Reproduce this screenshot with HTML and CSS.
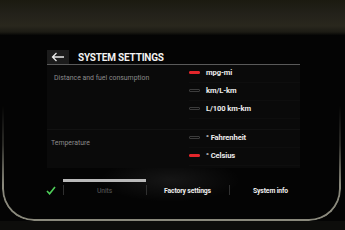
FILE: index.html
```html
<!DOCTYPE html>
<html>
<head>
<meta charset="utf-8">
<link rel="stylesheet" href="styles.css">
</head>
<body>
<div class="dash"></div>
<div class="screen">
  <div class="ui">
    <header class="head">
      <div class="back">
        <svg width="22" height="14" viewBox="0 0 22 14"><path d="M17 7H5.5M9.5 3L5.5 7l4 4" fill="none" stroke="#e8e8e8" stroke-width="1.3"/></svg>
      </div>
      <h1 class="title">SYSTEM SETTINGS</h1>
    </header>
    <div class="panel">
      <section class="group g1">
        <div class="label">Distance and fuel consumption</div>
        <ul class="opts">
          <li class="opt on"><span class="ind"></span>mpg-mi</li>
          <li class="opt"><span class="ind"></span>km/L-km</li>
          <li class="opt"><span class="ind"></span>L/100 km-km</li>
        </ul>
      </section>
      <section class="group g2">
        <div class="label">Temperature</div>
        <ul class="opts">
          <li class="opt"><span class="ind"></span>° Fahrenheit</li>
          <li class="opt on"><span class="ind"></span>° Celsius</li>
        </ul>
      </section>
    </div>
  </div>
  <nav class="tabs">
    <div class="check">
      <svg width="10" height="9" viewBox="0 0 10 9"><path d="M1 5l2.6 2.8L9 1" fill="none" stroke="#4fd05a" stroke-width="1.6"/></svg>
    </div>
    <div class="tab active">Units</div>
    <div class="tab">Factory settings</div>
    <div class="tab">System info</div>
  </nav>
</div>
</body>
</html>
```
FILE: styles.css
```css
* { box-sizing: border-box; }
html, body { margin: 0; padding: 0; }
body {
  width: 345px;
  height: 230px;
  overflow: hidden;
  background: #050505;
  font-family: Roboto, "Liberation Sans", sans-serif;
  color: #e8e8e8;
}
.dash {
  height: 35px;
  background: linear-gradient(to bottom, #1b1a10 0px, #23211a 14px, #29271d 26px, #1c1b14 32px, #070706 35px);
}
.screen {
  position: relative;
  height: 195px;
  background:
    radial-gradient(ellipse 70px 22px at 170px 145px, rgba(255,255,255,0.07), rgba(255,255,255,0) 100%),
    #040404;
}
.screen::before {
  content: "";
  position: absolute;
  left: 2px;
  right: 4px;
  top: 0;
  bottom: 9px;
  border: 2px solid #8a897c;
  border-top: none;
  border-radius: 0 0 32px 32px;
  -webkit-mask-image: linear-gradient(to bottom, rgba(0,0,0,0) 0px, rgba(0,0,0,0) 70px, rgba(0,0,0,0.3) 110px, #000 150px);
  mask-image: linear-gradient(to bottom, rgba(0,0,0,0) 0px, rgba(0,0,0,0) 70px, rgba(0,0,0,0.3) 110px, #000 150px);
  pointer-events: none;
}
.screen::after {
  content: "";
  position: absolute;
  left: 0;
  right: 0;
  bottom: 0;
  height: 9px;
  background: #0d0d0b;
}
.ui {
  margin-left: 47px;
  width: 253px;
  padding-top: 15px;
}
.head {
  display: flex;
  align-items: center;
  height: 15px;
  border-bottom: 1px solid #5a5a5a;
}
.back {
  width: 22px;
  height: 14px;
  background: #1c1c1c;
  display: flex;
  align-items: center;
  justify-content: center;
}
.back svg { display: block; }
.title {
  margin: 0 0 0 9px;
  font-size: 10px;
  font-weight: 700;
  letter-spacing: -0.2px;
  color: #f2f2f2;
  line-height: 14px;
  padding-top: 1px;
}
.panel {
  background: #0a0a0a;
  height: 103px;
}
.group {
  display: grid;
  grid-template-columns: 142px 1fr;
}
.g2 {
  margin-top: 10px;
  border-top: 1px solid #121212;
}
.label {
  padding: 9px 0 0 7px;
  font-size: 6.9px;
  line-height: 8px;
  color: #8a8a8a;
  letter-spacing: 0;
}
.g2 .label { padding-left: 4px; }
.opts {
  list-style: none;
  margin: 0;
  padding: 0;
}
.opt {
  height: 18px;
  padding-bottom: 3px;
  display: flex;
  align-items: center;
  font-size: 7.6px;
  font-weight: 700;
  color: #ececec;
  letter-spacing: -0.1px;
  border-bottom: 1px solid #0e0e0e;
}
.ind {
  width: 11px;
  height: 3px;
  margin-right: 6px;
  border: 1px solid #3c3c3c;
  border-radius: 1px;
}
.on .ind {
  background: #e3262b;
  border-color: #e3262b;
}
.tabs {
  display: flex;
  margin-top: 11px;
  margin-left: 44px;
  height: 20px;
}
.check {
  width: 19px;
  display: flex;
  align-items: center;
  padding-top: 3px;
  padding-left: 2px;
}
.check svg { display: block; }
.tab {
  width: 83px;
  display: flex;
  align-items: center;
  justify-content: center;
  padding-top: 3px;
  font-size: 6.8px;
  font-weight: 700;
  letter-spacing: -0.15px;
  color: #f0f0f0;
  background: linear-gradient(#303030, #303030) left 6px / 1px 10px no-repeat;
}
.tab.active {
  color: #4a4a4a;
  font-weight: 500;
  background:
    linear-gradient(#b9b9b9, #b9b9b9) left top / 83px 3px no-repeat,
    linear-gradient(#303030, #303030) left 6px / 1px 10px no-repeat;
}
```
